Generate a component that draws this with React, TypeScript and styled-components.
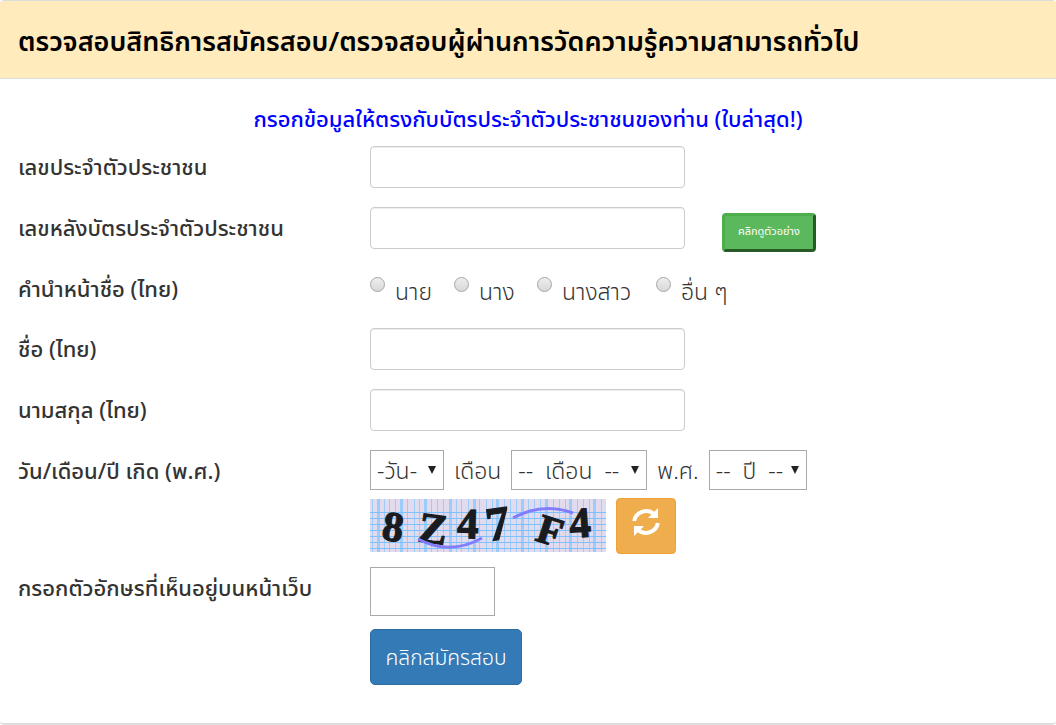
import React from 'react';
import styled, { createGlobalStyle } from 'styled-components';

const Global = createGlobalStyle`
  *, *::before, *::after { box-sizing: border-box; }
  html { background: #fff; }
  body {
    margin: 0;
    color: #333;
    font-family: "Noto Sans Thai", "Noto Sans", "Liberation Sans", sans-serif;
    font-size: 22px;
    line-height: 32px;
  }
  button, input, select { font: inherit; color: inherit; margin: 0; }
`;

const Panel = styled.main`
  border-top: 1px solid #ddd;
  border-bottom: 2px solid #ddd;
  border-radius: 4px;
  overflow: hidden;
`;

const PanelHeader = styled.header`
  padding: 21px 18px 15px;
  background: #ffebbc;
  border-bottom: 1px solid #ddd;
`;

const Title = styled.h1`
  margin: 0;
  color: #000;
  font-size: 27px;
  line-height: 41px;
  font-weight: 600;
  white-space: nowrap;
`;

const Form = styled.form`
  padding: 26px 18px 38px;
`;

const Notice = styled.p`
  margin: 0 0 9px;
  color: #00f;
  text-align: center;
  font-weight: 500;
`;

const Row = styled.div<{ $gap?: number }>`
  display: grid;
  grid-template-columns: calc(33.333% + 12px) 1fr;
  align-items: start;
  min-height: 42px;
  margin-bottom: ${(p) => p.$gap ?? 19}px;
`;

const Label = styled.label`
  padding-top: 7px;
  font-weight: 500;
  white-space: nowrap;
`;

const Controls = styled.div<{ $gap?: number }>`
  grid-column: 2;
  display: flex;
  align-items: center;
  gap: ${(p) => p.$gap ?? 10}px;
  font-size: 23px;
  font-weight: 300;
  white-space: nowrap;
`;

const Choices = styled(Controls)`
  padding-top: 9px;
`;

const TextInput = styled.input`
  width: 315px;
  height: 42px;
  padding: 4px 12px;
  background: #fff;
  border: 1px solid #ccc;
  border-radius: 4px;
  box-shadow: inset 0 1px 1px rgba(0, 0, 0, 0.075);
`;

const CodeInput = styled.input`
  width: 125px;
  height: 49px;
  padding: 4px 8px;
  background: #fff;
  border: 1px solid #a9a9a9;
`;

const ExampleButton = styled.button`
  width: 94px;
  height: 39px;
  margin: 4px 0 -4px;
  padding: 0;
  color: #fff;
  background: #5cb85c;
  border: 3px solid;
  border-color: #4cae4c #265a26 #265a26 #4cae4c;
  border-radius: 4px;
  font-size: 11px;
  font-weight: 400;
  line-height: 16px;
`;

const Choice = styled.label<{ $width: number }>`
  display: flex;
  align-items: center;
  gap: 10px;
  width: ${(p) => p.$width}px;
`;

const Radio = styled.input`
  appearance: none;
  flex: none;
  width: 15px;
  height: 15px;
  margin-bottom: 17px;
  border: 1px solid #a6a6a6;
  border-radius: 50%;
  background: linear-gradient(#eee, #d8d8d8);
  &:checked { background: radial-gradient(#444 35%, #e2e2e2 40%); }
`;

const Word = styled.span`
  padding-top: 4px;
`;

const SelectBox = styled.span<{ $width: number }>`
  display: grid;
  align-items: center;
  width: ${(p) => p.$width}px;
  & > * { grid-area: 1 / 1; }
`;

const Select = styled.select`
  appearance: none;
  width: 100%;
  height: 40px;
  padding: 4px 6px 0;
  background: #fff;
  border: 1px solid #a9a9a9;
  border-radius: 0;
`;

const Arrow = styled.svg`
  justify-self: end;
  margin-right: 8px;
  pointer-events: none;
`;

const CaptchaImage = styled.svg`
  margin-bottom: 1px;
  overflow: visible;
`;

const RefreshButton = styled.button`
  display: flex;
  justify-content: center;
  width: 60px;
  height: 56px;
  padding: 9px 0;
  color: #fff;
  background: #f0ad4e;
  border: 1px solid #eea236;
  border-radius: 4px;
`;

const SubmitButton = styled.button`
  width: 152px;
  height: 56px;
  padding: 4px 0 0;
  color: #fff;
  background: #337ab7;
  border: 1px solid #2e6da4;
  border-radius: 5px;
  font-size: 21px;
`;

function Field({ id, label, children }: { id: string; label: string; children?: React.ReactNode }) {
  return (
    <Row>
      <Label htmlFor={id}>{label}</Label>
      <Controls $gap={37}>
        <TextInput id={id} name={id} type="text" />
        {children}
      </Controls>
    </Row>
  );
}

function Dropdown({ label, text, width }: { label: string; text: string; width: number }) {
  return (
    <SelectBox $width={width}>
      <Select aria-label={label}>
        <option>{text}</option>
      </Select>
      <Arrow width="8" height="8" viewBox="0 0 8 8" aria-hidden="true">
        <path d="M0 0h8L4 8z" fill="#222" />
      </Arrow>
    </SelectBox>
  );
}

const columns = [2, 8, 14, 19, 25, 31, 37, 44, 49, 55, 61, 67, 73, 80, 86, 91, 98, 104, 109, 116, 122, 127, 134, 140, 146, 152, 158, 164, 170, 176, 183, 189, 195, 200, 207, 213, 219, 224, 231];
const lines = [13, 19, 25, 31, 37, 43, 49];
const glyphs = [
  { c: '8', x: 23, y: 28, size: 42, turn: 8 },
  { c: 'Z', x: 63, y: 30, size: 43, turn: 8 },
  { c: '4', x: 98, y: 25, size: 43, turn: 2 },
  { c: '7', x: 128, y: 25, size: 48, turn: -8 },
  { c: 'F', x: 180, y: 32, size: 41, turn: 18 },
  { c: '4', x: 210, y: 24, size: 43, turn: -4 },
];

function Captcha() {
  return (
    <CaptchaImage width="236" height="53" viewBox="0 0 236 53" role="img" aria-label="captcha">
      <rect width="236" height="53" fill="#e2dbed" />
      {columns.map((x, i) => (
        <path key={x} d={`M${x}.5 0V53`} stroke="#9dccfb" strokeWidth={i % 4 === 1 ? 3 : 1} />
      ))}
      {lines.map((y) => (
        <path key={y} d={`M0 ${y}.5H236`} stroke="#7fc1ff" />
      ))}
      <g
        fill="#191b20"
        stroke="#191b20"
        strokeWidth="1.2"
        fontFamily="Liberation Serif, serif"
        fontWeight="700"
        textAnchor="middle"
      >
        {glyphs.map((g) => (
          <text
            key={g.x}
            x={g.x}
            y={g.y + g.size * 0.33}
            fontSize={g.size}
            transform={`rotate(${g.turn} ${g.x} ${g.y})`}
          >
            {g.c}
          </text>
        ))}
      </g>
      <g fill="none" stroke="#827dff" strokeWidth="3">
        <path d="M48 40Q80 57 112 39" />
        <path d="M143 19Q173 3 203 14" />
      </g>
    </CaptchaImage>
  );
}

function RefreshIcon() {
  return (
    <svg width="28" height="28" viewBox="0 0 28 28" aria-hidden="true">
      <g fill="none" stroke="currentColor" strokeWidth="4">
        <path d="M2.200 13A12 11.500 0 0 1 22 6" />
        <path d="M25.800 15A12 11.500 0 0 1 6 22" />
      </g>
      <path d="M26 0v10H16zM2 28V18h10z" fill="currentColor" />
    </svg>
  );
}

export default function App() {
  return (
    <>
      <Global />
      <Panel>
        <PanelHeader>
          <Title>ตรวจสอบสิทธิการสมัครสอบ/ตรวจสอบผู้ผ่านการวัดความรู้ความสามารถทั่วไป</Title>
        </PanelHeader>
        <Form onSubmit={(e) => e.preventDefault()}>
          <Notice>กรอกข้อมูลให้ตรงกับบัตรประจำตัวประชาชนของท่าน (ใบล่าสุด!)</Notice>
          <Field id="citizen" label="เลขประจำตัวประชาชน" />
          <Field id="laser" label="เลขหลังบัตรประจำตัวประชาชน">
            <ExampleButton type="button">คลิกดูตัวอย่าง</ExampleButton>
          </Field>
          <Row role="radiogroup" aria-labelledby="prefix" $gap={18}>
            <Label as="span" id="prefix">คำนำหน้าชื่อ (ไทย)</Label>
            <Choices $gap={0}>
              <Choice $width={84}><Radio type="radio" name="prefix" />นาย</Choice>
              <Choice $width={83}><Radio type="radio" name="prefix" />นาง</Choice>
              <Choice $width={119}><Radio type="radio" name="prefix" />นางสาว</Choice>
              <Choice $width={84}><Radio type="radio" name="prefix" />อื่น ๆ</Choice>
            </Choices>
          </Row>
          <Field id="name" label="ชื่อ (ไทย)" />
          <Field id="surname" label="นามสกุล (ไทย)" />
          <Row $gap={6}>
            <Label as="span">วัน/เดือน/ปี เกิด (พ.ศ.)</Label>
            <Controls>
              <Dropdown label="วัน" text="-วัน-" width={74} />
              <Word>เดือน</Word>
              <Dropdown label="เดือน" text={'--\u00a0 เดือน \u00a0--'} width={136} />
              <Word>พ.ศ.</Word>
              <Dropdown label="ปี" text={'--\u00a0 ปี \u00a0--'} width={98} />
            </Controls>
          </Row>
          <Row $gap={13}>
            <Controls>
              <Captcha />
              <RefreshButton type="button" aria-label="refresh"><RefreshIcon /></RefreshButton>
            </Controls>
          </Row>
          <Row $gap={13}>
            <Label htmlFor="code">กรอกตัวอักษรที่เห็นอยู่บนหน้าเว็บ</Label>
            <Controls><CodeInput id="code" type="text" /></Controls>
          </Row>
          <Row $gap={0}>
            <Controls><SubmitButton type="submit">คลิกสมัครสอบ</SubmitButton></Controls>
          </Row>
        </Form>
      </Panel>
    </>
  );
}
